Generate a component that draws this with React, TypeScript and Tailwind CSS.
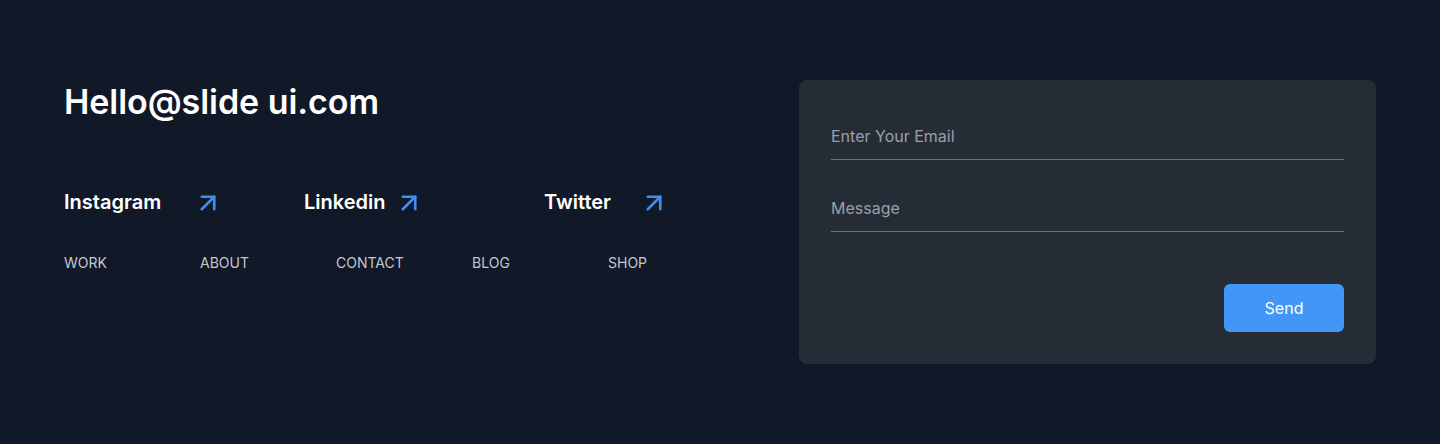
import React from "react";
import { ArrowUpRight } from "lucide-react";

export default function App() {
  const font = { fontFamily: "Inter, 'Noto Sans', sans-serif" };
  const socials = [
    { name: "Instagram", w: "w-[129px]" },
    { name: "Linkedin", w: "w-[90px]" },
    { name: "Twitter", w: "w-[95px]" },
  ];
  const nav = ["WORK", "ABOUT", "CONTACT", "BLOG", "SHOP"];
  return (
    <div className="min-h-[444px] w-full bg-[#111827] text-white" style={font}>
      <div className="flex justify-between pl-16 pr-16 pt-20">
        <div className="flex flex-col">
          <h1 className="text-[34px] leading-[44px] font-semibold tracking-[-0.05px] text-white">Hello@slide ui.com</h1>
          <div className="mt-[62px] flex">
            {socials.map((s) => (
              <div key={s.name} className="w-[240px] flex items-center">
                <span className={`${s.w} text-[20px] leading-7 font-semibold`}>{s.name}</span>
                <ArrowUpRight className="h-[30px] w-[30px] mt-[2px] text-[#3f8ef0]" strokeWidth={2.1} />
              </div>
            ))}
          </div>
          <div className="mt-[35px] flex">
            {nav.map((n) => (
              <span key={n} className="w-[136px] text-[14px] leading-5 text-[#c5c9d1]">{n}</span>
            ))}
          </div>
        </div>
        <div className="w-[577px] h-[284px] rounded-lg bg-[#262c35] p-8 flex flex-col">
          <div className="h-12 border-b border-[#6b7079] flex items-center">
            <span className="text-[16px] text-[#9aa0a8]">Enter Your Email</span>
          </div>
          <div className="mt-6 h-12 border-b border-[#6b7079] flex items-center">
            <span className="text-[16px] text-[#9aa0a8]">Message</span>
          </div>
          <div className="mt-[52px] flex justify-end">
            <button className="h-12 w-[120px] rounded-md bg-[#4196f6] text-[16px] text-white">Send</button>
          </div>
        </div>
      </div>
    </div>
  );
}
